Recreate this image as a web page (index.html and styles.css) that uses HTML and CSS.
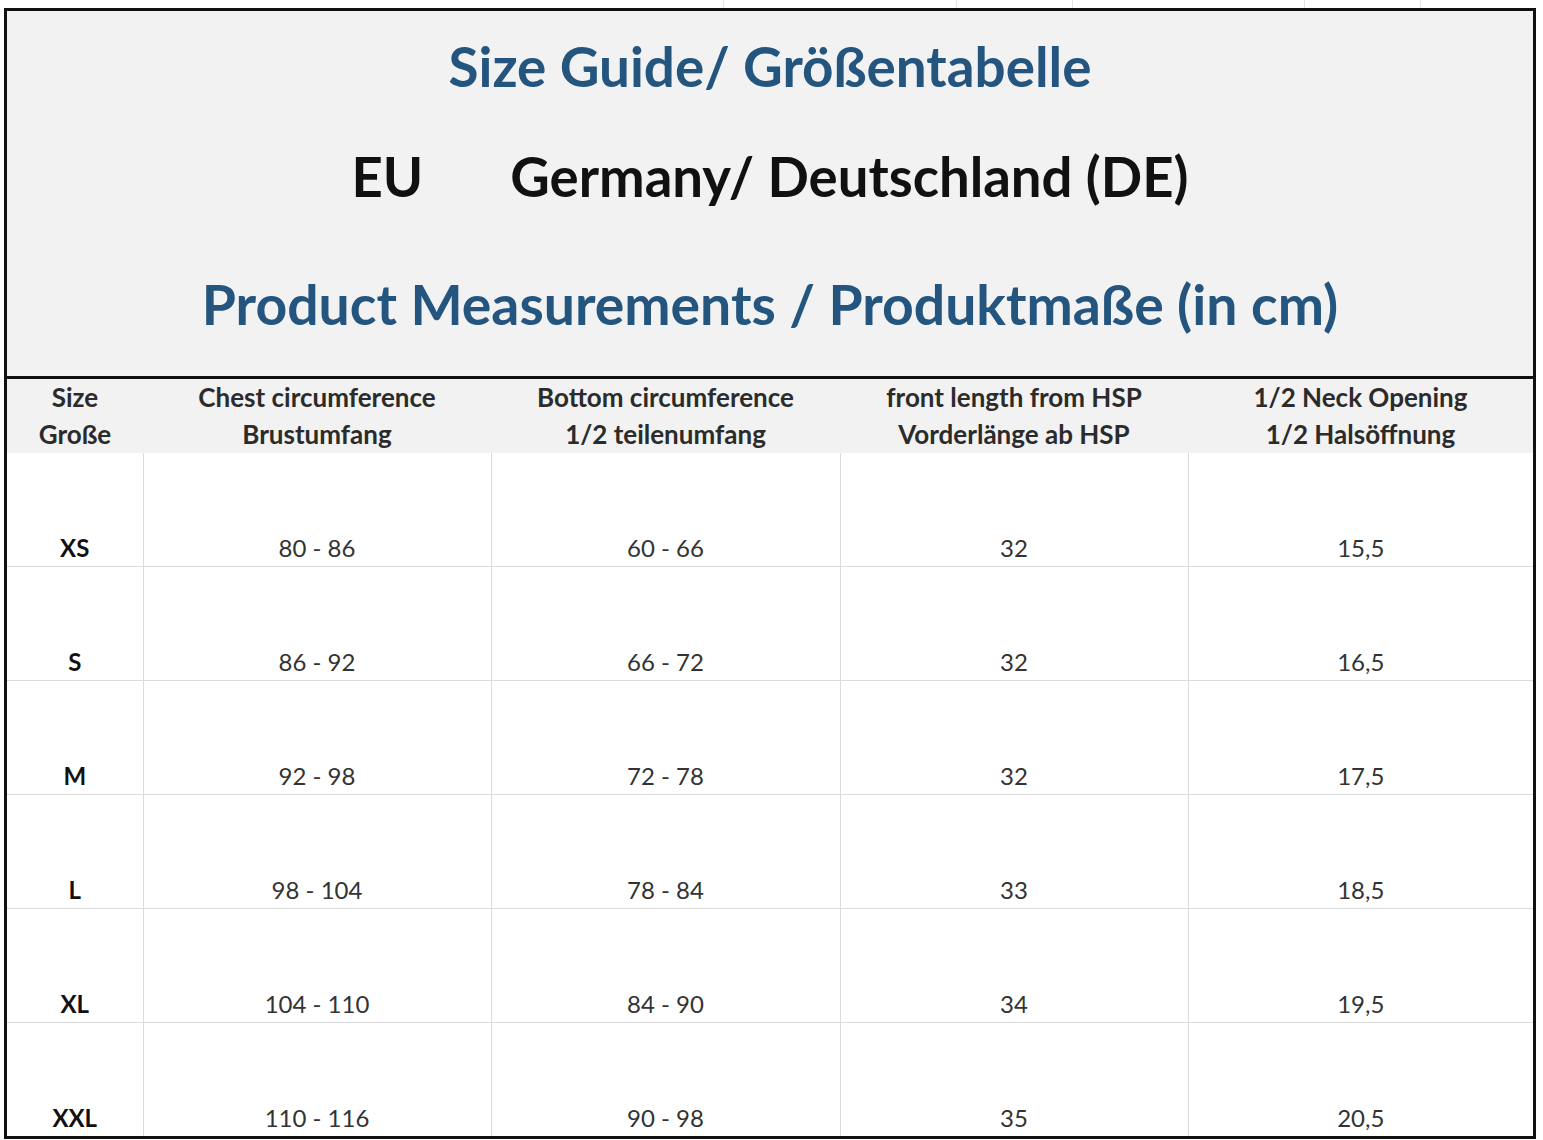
FILE: index.html
```html
<!DOCTYPE html>
<html lang="de">
<head>
<meta charset="utf-8">
<title>Size Guide</title>
<link rel="stylesheet" href="styles.css">
</head>
<body>
<div class="topstrip"></div>
<div class="sheet">
  <div class="banner">
    <div class="title t1">Size Guide/ Größentabelle</div>
    <div class="title t2"><span class="eu">EU</span><span>Germany/ Deutschland (DE)</span></div>
    <div class="title t3">Product Measurements / Produktmaße (in cm)</div>
  </div>
  <table class="grid">
    <colgroup>
      <col class="c1"><col class="c2"><col class="c3"><col class="c4"><col class="c5">
    </colgroup>
    <thead>
      <tr>
        <th>Size<br>Große</th>
        <th>Chest circumference<br>Brustumfang</th>
        <th>Bottom circumference<br>1/2 teilenumfang</th>
        <th>front length from HSP<br>Vorderlänge ab HSP</th>
        <th>1/2 Neck Opening<br>1/2 Halsöffnung</th>
      </tr>
    </thead>
    <tbody>
      <tr><td class="sz">XS</td><td>80 - 86</td><td>60 - 66</td><td>32</td><td>15,5</td></tr>
      <tr><td class="sz">S</td><td>86 - 92</td><td>66 - 72</td><td>32</td><td>16,5</td></tr>
      <tr><td class="sz">M</td><td>92 - 98</td><td>72 - 78</td><td>32</td><td>17,5</td></tr>
      <tr><td class="sz">L</td><td>98 - 104</td><td>78 - 84</td><td>33</td><td>18,5</td></tr>
      <tr><td class="sz">XL</td><td>104 - 110</td><td>84 - 90</td><td>34</td><td>19,5</td></tr>
      <tr><td class="sz">XXL</td><td>110 - 116</td><td>90 - 98</td><td>35</td><td>20,5</td></tr>
    </tbody>
  </table>
</div>
</body>
</html>
```
FILE: styles.css
```css
html, body {
  margin: 0;
  padding: 0;
  background: #ffffff;
}
body {
  font-family: Lato, "Open Sans", sans-serif;
  width: 1543px;
  height: 1140px;
  overflow: hidden;
}
.topstrip {
  height: 8px;
  background:
    linear-gradient(90deg, transparent 723px, #e4e4e4 723px, #e4e4e4 724px, transparent 724px),
    linear-gradient(90deg, transparent 956px, #e4e4e4 956px, #e4e4e4 957px, transparent 957px),
    linear-gradient(90deg, transparent 1072px, #e4e4e4 1072px, #e4e4e4 1073px, transparent 1073px),
    linear-gradient(90deg, transparent 1304px, #e4e4e4 1304px, #e4e4e4 1305px, transparent 1305px),
    linear-gradient(90deg, transparent 1420px, #e4e4e4 1420px, #e4e4e4 1421px, transparent 1421px);
}
.sheet {
  margin-left: 4px;
  width: 1526px;
  border: 3px solid #111111;
}
.banner {
  height: 365px;
  background: #f2f2f2;
  border-bottom: 3px solid #111111;
  display: flex;
  flex-direction: column;
  align-items: center;
}
.title {
  font-weight: 700;
  white-space: nowrap;
}
.t1 {
  color: #24557f;
  font-size: 54.8px;
  margin-top: 25px;
  line-height: 60px;
}
.t2 {
  color: #111111;
  font-size: 54.5px;
  line-height: 60px;
  margin-top: 50px;
  display: flex;
  gap: 87px;
}
.t3 {
  color: #24557f;
  font-size: 55.3px;
  line-height: 64px;
  margin-top: 66px;
}
.grid {
  width: 1526px;
  border-collapse: collapse;
  table-layout: fixed;
}
.c1 { width: 136px; }
.c2 { width: 348px; }
.c3 { width: 349px; }
.c4 { width: 348px; }
.c5 { width: 345px; }
.grid th {
  background: #f2f2f2;
  height: 73px;
  padding: 0;
  font-size: 26px;
  line-height: 37px;
  font-weight: 700;
  color: #2b2b2b;
  text-align: center;
  vertical-align: middle;
}
.grid td {
  height: 110px;
  padding: 0 0 3px 0;
  font-size: 24px;
  line-height: 30px;
  color: #333333;
  text-align: center;
  vertical-align: bottom;
  border-right: 1px solid #dcdcdc;
  border-bottom: 1px solid #dcdcdc;
}
.grid td:last-child {
  border-right: none;
}
.grid tbody tr:last-child td {
  border-bottom: none;
}
.grid td.sz {
  font-weight: 700;
  color: #111111;
}
```
